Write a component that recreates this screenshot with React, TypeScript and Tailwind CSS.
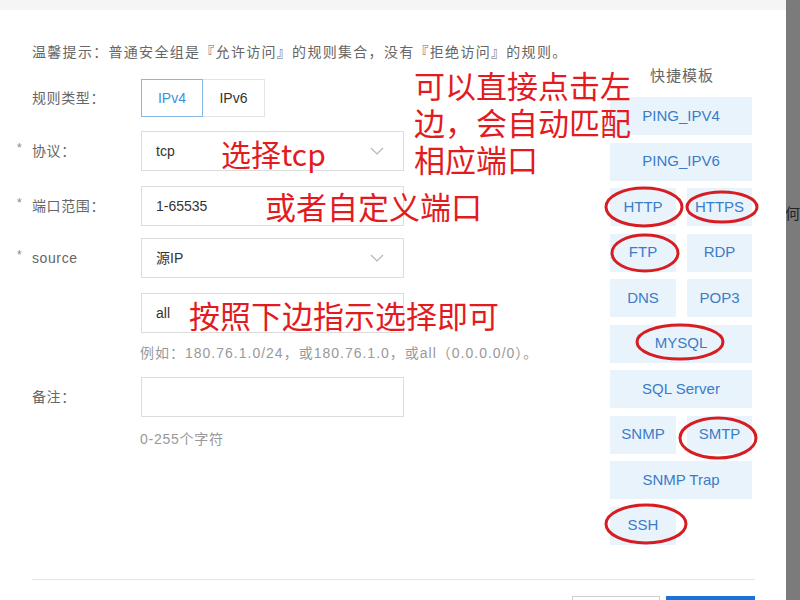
const FONT = "font-['Liberation_Sans','Noto_Sans_CJK_SC',sans-serif]";
const CJK = "font-['Noto_Sans_CJK_SC','Liberation_Sans',sans-serif]";

type Tpl = { label: string; wide?: boolean };

const TEMPLATES: Tpl[] = [
  { label: "PING_IPV4", wide: true },
  { label: "PING_IPV6", wide: true },
  { label: "HTTP" },
  { label: "HTTPS" },
  { label: "FTP" },
  { label: "RDP" },
  { label: "DNS" },
  { label: "POP3" },
  { label: "MYSQL", wide: true },
  { label: "SQL Server", wide: true },
  { label: "SNMP" },
  { label: "SMTP" },
  { label: "SNMP Trap", wide: true },
  { label: "SSH" },
];

// 手工标注的红圈
const CIRCLES = [
  { cx: 644, cy: 207, rx: 38, ry: 19 },
  { cx: 722, cy: 207, rx: 35, ry: 15 },
  { cx: 645, cy: 253, rx: 33, ry: 18 },
  { cx: 680, cy: 342, rx: 43, ry: 17 },
  { cx: 718, cy: 438, rx: 38, ry: 20 },
  { cx: 646, cy: 524, rx: 40, ry: 19 },
];

function Chevron() {
  return (
    <svg width="14" height="8" viewBox="0 0 14 8" fill="none">
      <path d="M1 1l6 6 6-6" stroke="#b5b5b5" strokeWidth="1.2" />
    </svg>
  );
}

function Label({ text, required }: { text: string; required?: boolean }) {
  return (
    <div className="flex w-[124px] shrink-0 items-center">
      <span className="w-[15px] -translate-y-[3px] text-[12px] leading-none text-[#888]">{required ? "*" : ""}</span>
      <span className="text-[14px] tracking-[0.6px] text-[#666]">{text}</span>
    </div>
  );
}

function Box({ children, select }: { children?: React.ReactNode; select?: boolean }) {
  return (
    <div className="flex h-[40px] w-[263px] items-center justify-between border border-[#dcdcdc] bg-white pl-[14px] pr-[19px] text-[14px] text-[#333]">
      <span>{children}</span>
      {select && <Chevron />}
    </div>
  );
}

export default function App() {
  return (
    <div className={`flex h-[600px] w-[800px] overflow-hidden bg-[#7b7b7b] ${FONT}`}>
      <div className="relative flex h-[600px] w-[786px] shrink-0 flex-col overflow-hidden bg-white">
        <div className="h-[10px] shrink-0 bg-[#f5f5f5]" />
        <p className="pl-[32px] pt-[32px] text-[14px] leading-[20px] tracking-[1.3px] text-[#666]">
          温馨提示：普通安全组是『允许访问』的规则集合，没有『拒绝访问』的规则。
        </p>

        <div className="flex shrink-0">
          {/* 表单 */}
          <div className="flex w-[610px] flex-col pl-[17px] pt-[17px]">
            <div className="flex h-[38px] items-center">
              <Label text="规则类型：" />
              <div className="flex text-[14px]">
                <div className="flex h-[38px] w-[62px] items-center justify-center border border-[#86b8e3] text-[#3d8fd8]">IPv4</div>
                <div className="flex h-[38px] w-[62px] items-center justify-center border border-l-0 border-[#e3e3e3] text-[#333]">IPv6</div>
              </div>
            </div>

            <div className="mt-[14px] flex items-center">
              <Label text="协议：" required />
              <Box select>tcp</Box>
            </div>

            <div className="mt-[15px] flex items-center">
              <Label text="端口范围：" required />
              <Box>1-65535</Box>
            </div>

            <div className="mt-[12px] flex items-center">
              <Label text="source" required />
              <Box select>源IP</Box>
            </div>

            <div className="mt-[15px] flex items-center">
              <div className="w-[124px] shrink-0" />
              <Box>all</Box>
            </div>

            <p className="ml-[123px] mt-[10px] text-[14px] leading-[20px] tracking-[1px] text-[#999]">
              例如：180.76.1.0/24，或180.76.1.0，或all（0.0.0.0/0）。
            </p>

            <div className="mt-[14px] flex items-center">
              <Label text="备注：" />
              <Box />
            </div>

            <p className="ml-[123px] mt-[12px] text-[14px] leading-[20px] tracking-[0.75px] text-[#999]">0-255个字符</p>
          </div>

          {/* 快捷模板 */}
          <div className="flex w-[142px] flex-col pt-[4px]">
            <div className="h-[20px] pl-[40px] text-[15px] leading-[20px] tracking-[1px] text-[#666]">快捷模板</div>
            <div className="mt-[11px] grid grid-cols-[66px_65px] gap-x-[11px] gap-y-[7.5px]">
              {TEMPLATES.map((t) => (
                <div
                  key={t.label}
                  className={`flex h-[38px] items-center justify-center bg-[#e9f3fc] text-[15px] text-[#3b7cc8] ${
                    t.wide ? "col-span-2" : ""
                  }`}
                >
                  {t.label}
                </div>
              ))}
            </div>
          </div>
        </div>

        <div className="mt-[34px] shrink-0 pl-[32px] pr-[31px]">
          <div className="h-px bg-[#e6e6e6]" />
          <div className="mt-[16px] flex justify-end gap-[6px]">
            <div className="h-[30px] w-[88px] border border-[#cfcfcf] bg-white" />
            <div className="h-[30px] w-[89px] bg-[#1b72d6]" />
          </div>
        </div>

        {/* 红色手写标注 */}
        <div className={`pointer-events-none absolute inset-0 text-[#e31b1f] ${CJK}`}>
          <p className="absolute left-[414px] top-[66px] text-[31px] leading-[37px]">
            可以直接点击左
            <br />
            边，会自动匹配
            <br />
            相应端口
          </p>
          <p className="absolute left-[221px] top-[138px] text-[30px] leading-none">选择tcp</p>
          <p className="absolute left-[265px] top-[190px] text-[31px] leading-none">或者自定义端口</p>
          <p className="absolute left-[189px] top-[299px] text-[31px] leading-none">按照下边指示选择即可</p>
          <svg className="absolute left-0 top-0" width="786" height="600" viewBox="0 0 786 600" fill="none">
            {CIRCLES.map((c, i) => (
              <ellipse key={i} cx={c.cx} cy={c.cy} rx={c.rx} ry={c.ry} stroke="#d61e22" strokeWidth="3" />
            ))}
          </svg>
        </div>
      </div>

      {/* 遮罩下露出的页面 */}
      <div className="relative h-[600px] w-[14px] shrink-0 overflow-hidden">
        <span className="absolute -left-[1px] top-[206px] text-[15px] leading-none text-[#222]">何</span>
      </div>
    </div>
  );
}
